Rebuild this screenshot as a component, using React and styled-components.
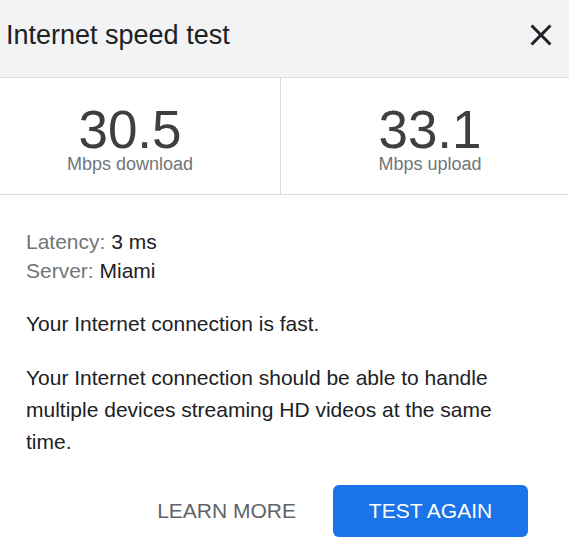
import React from "react";
import styled, { createGlobalStyle } from "styled-components";

const GlobalStyle = createGlobalStyle`
	html, body {
		margin: 0;
		padding: 0;
		background: #fff;
	}
	body {
		font-family: "Liberation Sans", Arial, sans-serif;
		color: #202124;
	}
`;

const Card = styled.div`
	width: 569px;
	height: 555px;
	background: #fff;
	overflow: hidden;
`;

const Header = styled.div`
	height: 60px;
	padding: 17px 10px 0 6px;
	background-color: #f1f3f4;
	border-bottom: 1px solid #dadce0;
	display: flex;
	justify-content: space-between;
	align-items: flex-start;
`;

const Title = styled.h1`
	margin: 0;
	font-size: 27px;
	line-height: 36px;
	font-weight: 400;
	color: #202124;
`;

const CloseButton = styled.button`
	width: 36px;
	height: 36px;
	padding: 0;
	border: none;
	background: none;
	cursor: pointer;
	svg {
		display: block;
		width: 36px;
		height: 36px;
		fill: #202124;
	}
`;

const Stats = styled.div`
	display: flex;
	height: 116px;
	border-bottom: 1px solid #dadce0;
`;

const Stat = styled.div`
	flex: ${(p) => (p.$first ? "0 0 281px" : "1")};
	box-sizing: border-box;
	border-right: ${(p) => (p.$first ? "1px solid #dadce0" : "none")};
	padding-top: 28px;
	padding-left: ${(p) => (p.$first ? "0" : "10px")};
	padding-right: ${(p) => (p.$first ? "20px" : "0")};
	display: flex;
	flex-direction: column;
	align-items: center;
`;

const Number = styled.div`
	font-size: 53px;
	line-height: 48px;
	color: #3c4043;
`;

const Unit = styled.div`
	margin-top: 1px;
	font-size: 18px;
	line-height: 18px;
	color: #70757a;
`;

const Body = styled.div`
	padding: 32px 26px 0;
	font-size: 21px;
`;

const InfoLine = styled.div`
	line-height: 29px;
	color: #202124;
	span {
		color: #70757a;
	}
`;

const Paragraph = styled.p`
	margin: ${(p) => (p.$first ? "23px" : "22px")} 0 0;
	line-height: 32px;
	color: #202124;
`;

const Actions = styled.div`
	display: flex;
	justify-content: flex-end;
	gap: 8px;
	padding: 27px 41px 0 0;
`;

const Button = styled.button`
	height: 52px;
	box-sizing: border-box;
	border: none;
	border-radius: 6px;
	font-family: "Liberation Sans", Arial, sans-serif;
	font-size: 21px;
	text-transform: uppercase;
	cursor: pointer;
	padding: ${(p) => (p.$primary ? "0" : "0 29px")};
	width: ${(p) => (p.$primary ? "195px" : "auto")};
	background: ${(p) => (p.$primary ? "#1a73e8" : "transparent")};
	color: ${(p) => (p.$primary ? "#fff" : "#5f6368")};
`;

export default function App() {
	return (
		<>
			<GlobalStyle />
			<Card>
				<Header>
					<Title>Internet speed test</Title>
					<CloseButton aria-label="Close">
						<svg viewBox="0 0 24 24">
							<path d="M19 6.41L17.59 5 12 10.59 6.41 5 5 6.41 10.59 12 5 17.59 6.41 19 12 13.41 17.59 19 19 17.59 13.41 12z" />
						</svg>
					</CloseButton>
				</Header>
				<Stats>
					<Stat $first>
						<Number>30.5</Number>
						<Unit>Mbps download</Unit>
					</Stat>
					<Stat>
						<Number>33.1</Number>
						<Unit>Mbps upload</Unit>
					</Stat>
				</Stats>
				<Body>
					<InfoLine>
						<span>Latency: </span>3 ms
					</InfoLine>
					<InfoLine>
						<span>Server: </span>Miami
					</InfoLine>
					<Paragraph $first>Your Internet connection is fast.</Paragraph>
					<Paragraph>
						Your Internet connection should be able to handle multiple devices
						streaming HD videos at the same time.
					</Paragraph>
				</Body>
				<Actions>
					<Button>Learn more</Button>
					<Button $primary>Test again</Button>
				</Actions>
			</Card>
		</>
	);
}
